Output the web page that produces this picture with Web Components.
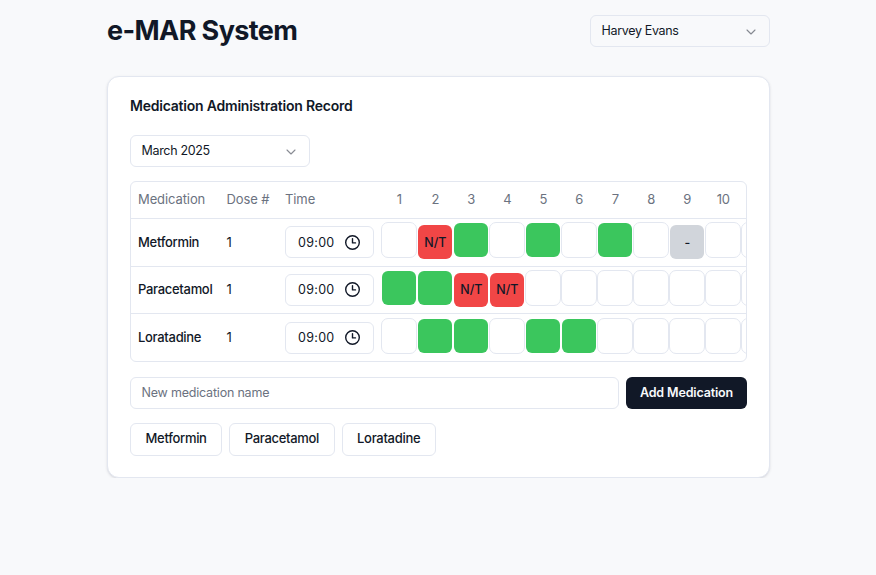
<!DOCTYPE html>
<html><head><meta charset="utf-8">
<style>
html,body{margin:0;padding:0;background:#f8f9fb;}
body{font-family:Inter,"Liberation Sans",sans-serif;color:#111827;}
</style></head><body>
<emar-app></emar-app>
<script>
const CHEV='<svg width="16" height="16" viewBox="0 0 24 24" fill="none" stroke="#111827" stroke-opacity=".5" stroke-width="1.6" stroke-linecap="round" stroke-linejoin="round"><path d="m6 9 6 6 6-6"/></svg>';
const CLOCK='<svg width="17" height="17" viewBox="0 0 17 17" fill="none" stroke="#111827" stroke-width="1.4" stroke-linecap="round" stroke-linejoin="round"><circle cx="8.5" cy="8.5" r="6.8"/><path d="M8.5 4.6v4.3h3"/></svg>';
const COLS='88.5px 58.5px 96.3px repeat(11,36px)';

class MarSelect extends HTMLElement{
  constructor(){super();this.attachShadow({mode:'open'}).innerHTML=`<style>
  :host{display:flex;align-items:center;justify-content:space-between;box-sizing:border-box;width:180px;height:32px;padding:0 9.7px 1px 10.5px;border:1px solid #e3e7f0;border-radius:6px;font-size:12.5px;letter-spacing:-.33px;color:#111827;background:var(--sel-bg,#fff);}
  svg{display:block;margin-top:3px}
  </style><slot></slot>${CHEV}`;}
}
customElements.define('mar-select',MarSelect);

class MarTime extends HTMLElement{
  constructor(){super();this.attachShadow({mode:'open'}).innerHTML=`<style>
  :host{display:flex;align-items:center;justify-content:space-between;box-sizing:border-box;width:89px;height:32px;padding:0 12px;border:1px solid #e3e7f0;border-radius:6px;font-size:12.5px;font-weight:400;letter-spacing:.3px;color:#111827;background:#fff;align-self:start;margin-top:7.3px}
  svg{display:block}
  </style><slot></slot>${CLOCK}`;}
}
customElements.define('mar-time',MarTime);

class MarCell extends HTMLElement{
  constructor(){super();this.attachShadow({mode:'open'}).innerHTML=`<style>
  :host{display:flex;align-items:center;justify-content:center;box-sizing:border-box;width:36px;height:36px;border:1px solid #e3e7f0;border-radius:7px;background:#fff;font-size:12.5px;font-weight:500;color:#111827;background-clip:padding-box;align-self:start;margin-top:3.3px}
  :host([s=g]){background:#3bc65d;border-color:transparent;background-clip:padding-box;}
  :host([s=n]){background:#f14646;border-color:transparent;background-clip:padding-box;transform:translateY(2px);}
  :host([s=x]){background:#d1d5db;border-color:transparent;background-clip:padding-box;transform:translateY(2px);}
  </style><slot></slot>`;}
}
customElements.define('mar-cell',MarCell);

class MarRow extends HTMLElement{
  constructor(){super();this.attachShadow({mode:'open'}).innerHTML=`<style>
  :host{display:grid;grid-template-columns:${COLS};align-items:center;box-sizing:border-box;height:47.67px;border-top:1px solid #e3e7f0;padding:0 0 1px 7px;font-size:13px;color:#111827;}
  ::slotted(.n){font-weight:500;letter-spacing:-.3px}
  ::slotted(.o){font-weight:400}
  </style><slot></slot>`;}
}
customElements.define('mar-row',MarRow);

class MarHead extends HTMLElement{
  constructor(){super();this.attachShadow({mode:'open'}).innerHTML=`<style>
  :host{display:grid;grid-template-columns:${COLS};align-items:center;box-sizing:border-box;height:36px;padding:0 0 1.5px 7px;font-size:13px;font-weight:400;letter-spacing:-.1px;color:#6b7280;}
  </style><slot></slot>`;}
}
customElements.define('mar-head',MarHead);

class MarTable extends HTMLElement{
  constructor(){super();
    const days=[1,2,3,4,5,6,7,8,9,10];
    const rows=[['Metformin',['','n','g','','g','','g','','x','','']],
                ['Paracetamol',['g','g','n','n','','','','','','','']],
                ['Loratadine',['','g','g','','g','g','','','','','']]];
    const cell=s=>`<mar-cell ${s?`s="${s}"`:''}>${s==='n'?'N/T':s==='x'?'-':''}</mar-cell>`;
    this.attachShadow({mode:'open'}).innerHTML=`<style>
    :host{display:block;border:1px solid #e3e7f0;border-radius:6px;overflow:hidden;width:617px;box-sizing:border-box;background:#fff}
    .inner{width:700px}
    </style><div class="inner">
    <mar-head><span>Medication</span><span>Dose #</span><span>Time</span>${days.map(d=>`<span style="text-align:center">${d}</span>`).join('')}<span></span></mar-head>
    ${rows.map(r=>`<mar-row><span class="n">${r[0]}</span><span class="o">1</span><mar-time>09:00</mar-time>${r[1].map(cell).join('')}</mar-row>`).join('')}
    </div>`;}
}
customElements.define('mar-table',MarTable);

class MarChip extends HTMLElement{
  constructor(){super();this.attachShadow({mode:'open'}).innerHTML=`<style>
  :host{display:flex;align-items:center;box-sizing:border-box;height:33px;padding:0 14.5px 2px;border:1px solid #e3e7f0;border-radius:6px;font-size:13px;font-weight:500;letter-spacing:-.3px;color:#111827;background:#fff;}
  </style><slot></slot>`;}
}
customElements.define('mar-chip',MarChip);

class MarCard extends HTMLElement{
  constructor(){super();this.attachShadow({mode:'open'}).innerHTML=`<style>
  :host{display:block;box-sizing:border-box;height:402px;padding:20px 22px;border:1px solid #e3e7f0;border-radius:12px;background:#fff;box-shadow:0 1px 3px rgba(15,23,42,.1),0 1px 2px -1px rgba(15,23,42,.1);}
  h2{margin:0;font-size:14px;font-weight:600;line-height:18px;letter-spacing:-.22px;color:#111827}
  .m{margin:20px 0 14px}
  .add{display:flex;gap:7px;margin-top:15px}
  .input{flex:1;box-sizing:border-box;height:32px;display:flex;align-items:center;padding:0 10.5px 1px;border:1px solid #e3e7f0;border-radius:6px;font-size:12.5px;letter-spacing:-.2px;color:#6b7280}
  .btn{box-sizing:border-box;width:121px;height:32px;display:flex;align-items:center;justify-content:center;padding-bottom:1px;border-radius:6px;background:#111827;color:#f8fafc;font-size:12.5px;font-weight:600;letter-spacing:-.15px}
  .chips{display:flex;gap:7px;margin-top:14px}
  </style>
  <h2>Medication Administration Record</h2>
  <div class="m"><mar-select>March 2025</mar-select></div>
  <mar-table></mar-table>
  <div class="add"><div class="input">New medication name</div><div class="btn">Add Medication</div></div>
  <div class="chips"><mar-chip>Metformin</mar-chip><mar-chip>Paracetamol</mar-chip><mar-chip>Loratadine</mar-chip></div>`;}
}
customElements.define('mar-card',MarCard);

class EmarApp extends HTMLElement{
  constructor(){super();this.attachShadow({mode:'open'}).innerHTML=`<style>
  :host{display:block;box-sizing:border-box;width:663px;margin-left:107px;padding-top:15px}
  header{display:flex;justify-content:space-between;align-items:center;height:32px;margin-bottom:29px}
  h1{margin:0;font-size:27px;font-weight:700;line-height:32px;letter-spacing:-.6px;color:#111827}
  mar-select{--sel-bg:transparent}
  </style>
  <header><h1>e-MAR System</h1><mar-select>Harvey Evans</mar-select></header>
  <mar-card></mar-card>`;}
}
customElements.define('emar-app',EmarApp);
</script>
</body></html>
